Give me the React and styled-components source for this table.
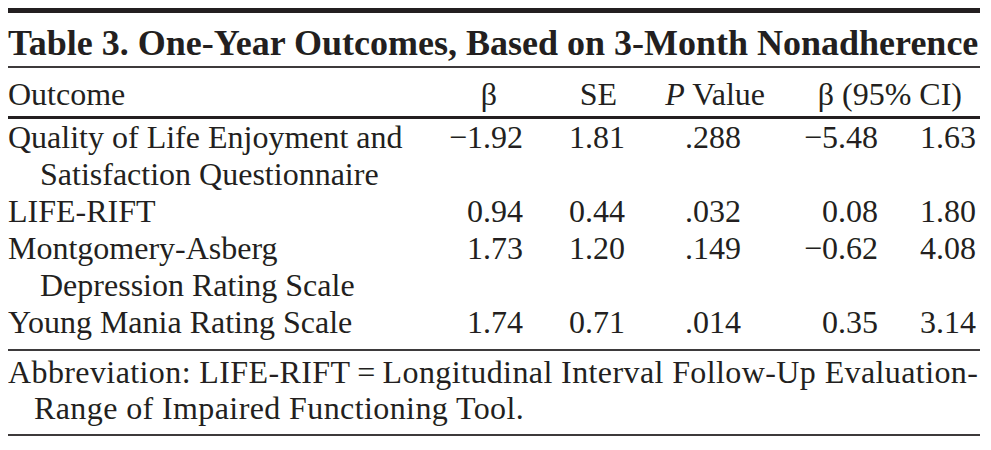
import React from 'react';
import styled, { createGlobalStyle } from 'styled-components';

const GlobalStyle = createGlobalStyle`
    body {
        margin: 8px;
        background: #fff;
        color: #231f20;
        font-family: "Liberation Serif", "Times New Roman", serif;
    }
`;

const COLS = '440px 90px 105px 135px 110px 92px';

let Table = styled.div`
    width: 972px;
    border-top: 5px solid #231f20;
`;

let Title = styled.div`
    font-size: 36px;
    font-weight: bold;
    line-height: 42px;
    padding: 9px 0 2px;
    white-space: nowrap;
    border-bottom: 2px solid #3d3a3b;
`;

let HeadRow = styled.div`
    display: grid;
    grid-template-columns: ${COLS};
    font-size: 32px;
    line-height: 38px;
    padding: 7px 0 3px;
    border-bottom: 3px solid #231f20;
`;

let Body = styled.div`
    padding-bottom: 8px;
    border-bottom: 2px solid #3d3a3b;
`;

let Row = styled.div`
    display: grid;
    grid-template-columns: ${COLS};
    font-size: 32px;
    line-height: 37px;
`;

let Label = styled.div`
    padding-left: 32px;
    text-indent: -32px;
`;

let Cell = styled.div`
    text-align: right;
    white-space: nowrap;
    padding-right: ${p => p.$pad}px;
    grid-column: ${p => (p.$span ? `span ${p.$span}` : 'auto')};
`;

let Note = styled.div`
    font-size: 32px;
    line-height: 36px;
    letter-spacing: 0.4px;
    padding: 3px 0 8px 26px;
    text-indent: -26px;
    border-bottom: 2px solid #3d3a3b;
`;

const pads = [15, 18, 37, 10, 4];

const rows = [
    { label: ['Quality of Life Enjoyment and', 'Satisfaction Questionnaire'], vals: ['−1.92', '1.81', '.288', '−5.48', '1.63'] },
    { label: ['LIFE-RIFT'], vals: ['0.94', '0.44', '.032', '0.08', '1.80'] },
    { label: ['Montgomery-Asberg', 'Depression Rating Scale'], vals: ['1.73', '1.20', '.149', '−0.62', '4.08'] },
    { label: ['Young Mania Rating Scale'], vals: ['1.74', '0.71', '.014', '0.35', '3.14'] },
];

export default function App() {
    return (
        <>
            <GlobalStyle />
            <Table>
                <Title>Table 3. One-Year Outcomes, Based on 3-Month Nonadherence</Title>
                <HeadRow>
                    <Label>Outcome</Label>
                    <Cell $pad={41}>β</Cell>
                    <Cell $pad={26}>SE</Cell>
                    <Cell $pad={13}><i>P</i> Value</Cell>
                    <Cell $pad={18} $span={2}>β (95% CI)</Cell>
                </HeadRow>
                <Body>
                    {rows.map((r, i) => (
                        <Row key={i}>
                            <Label>
                                {r.label.map((l, j) => (
                                    <React.Fragment key={j}>
                                        {j > 0 && <br />}
                                        {l}
                                    </React.Fragment>
                                ))}
                            </Label>
                            {r.vals.map((v, j) => (
                                <Cell key={j} $pad={pads[j]}>{v}</Cell>
                            ))}
                        </Row>
                    ))}
                </Body>
                <Note>
                    Abbreviation: LIFE-RIFT{'\u2009'}={'\u2009'}Longitudinal Interval Follow-Up Evaluation-
                    <br />
                    Range of Impaired Functioning Tool.
                </Note>
            </Table>
        </>
    );
}
